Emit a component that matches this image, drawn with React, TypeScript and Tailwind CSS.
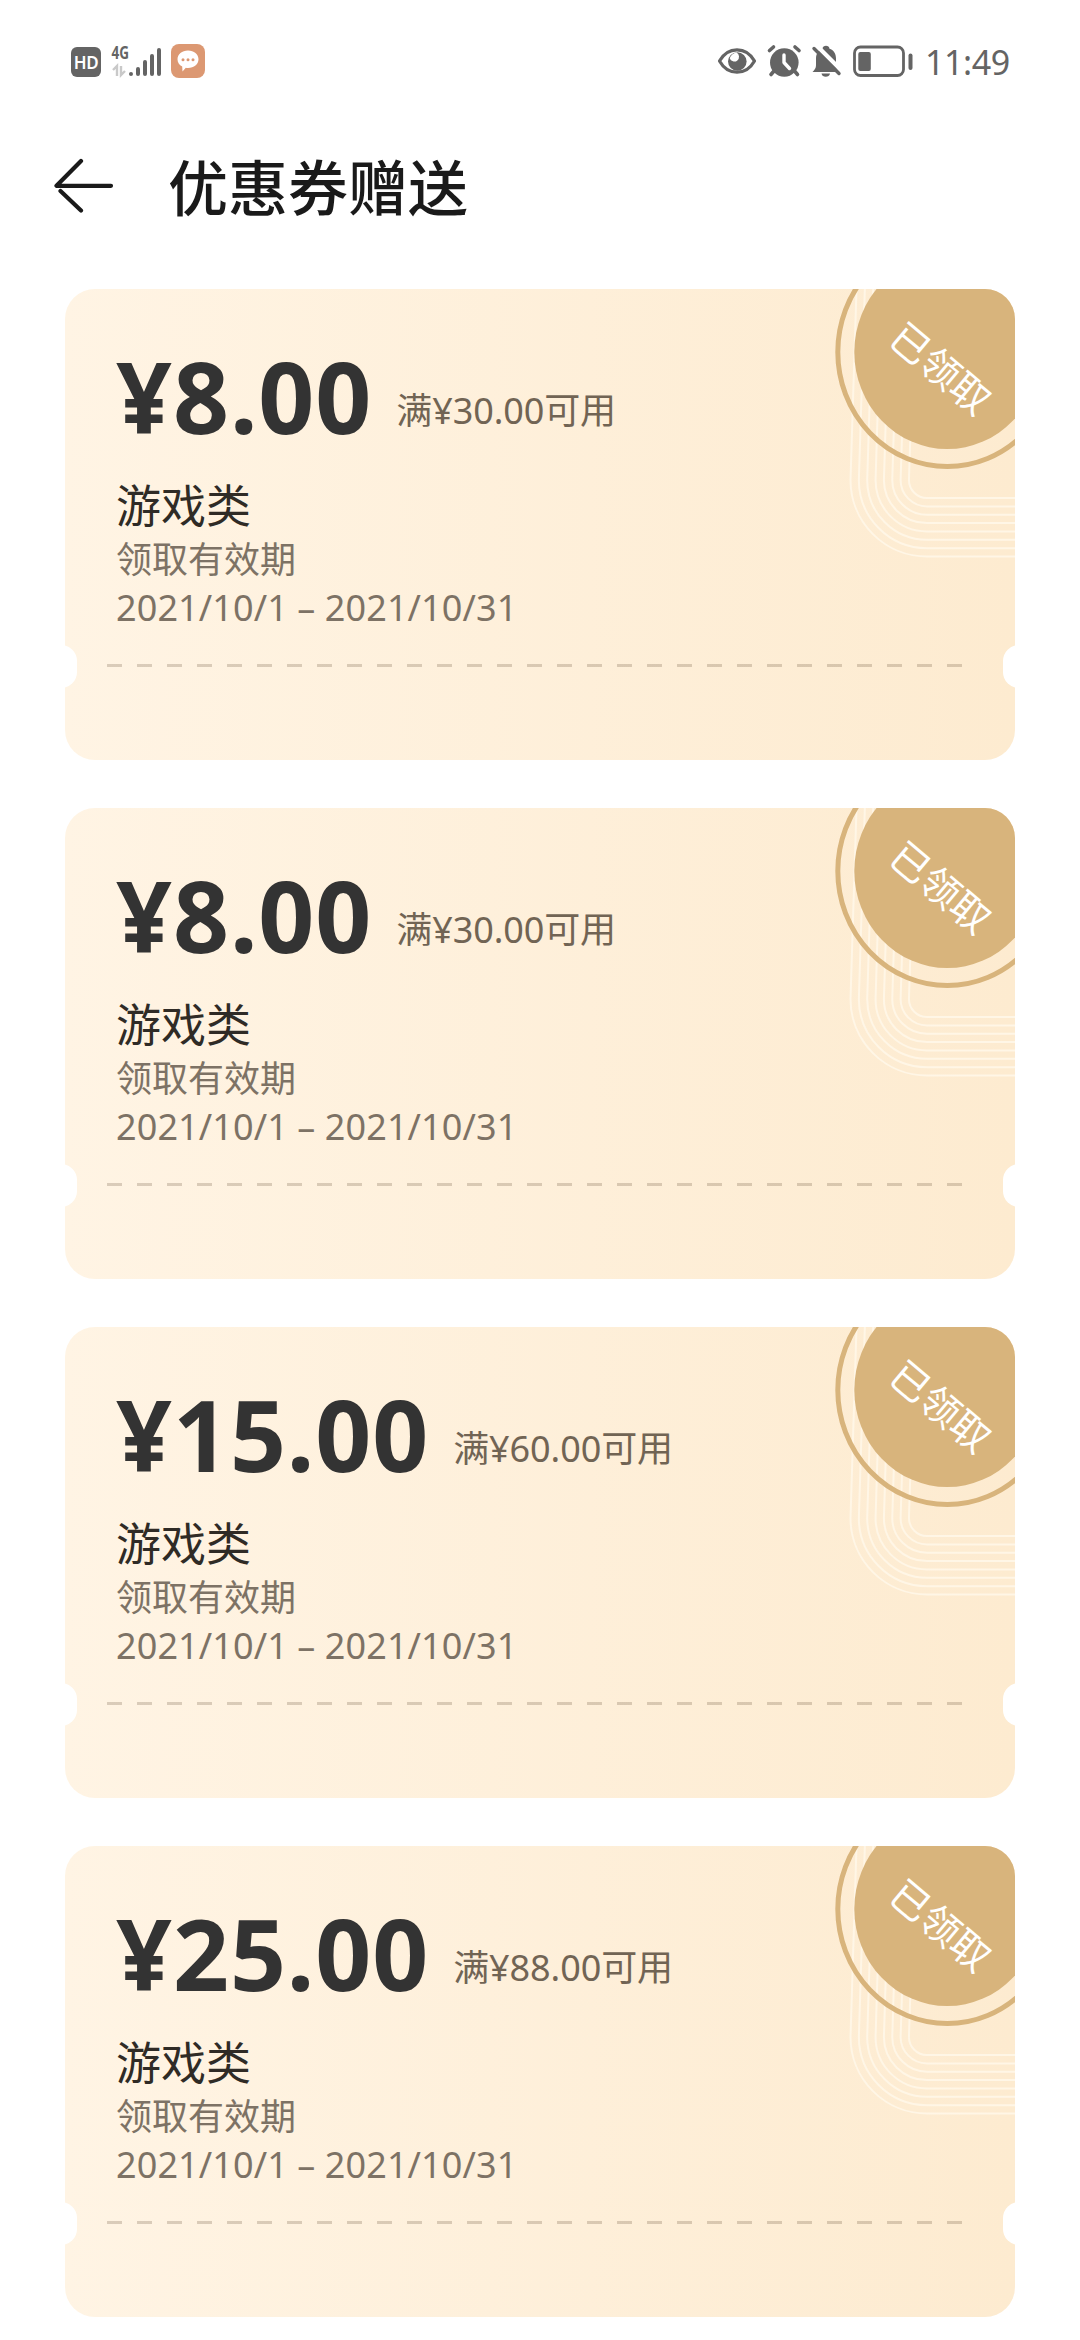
type Coupon = {
  id: number;
  price: string;
  condition: string;
};

const coupons: Coupon[] = [
  { id: 1, price: '¥8.00', condition: '满¥30.00可用' },
  { id: 2, price: '¥8.00', condition: '满¥30.00可用' },
  { id: 3, price: '¥15.00', condition: '满¥60.00可用' },
  { id: 4, price: '¥25.00', condition: '满¥88.00可用' },
];

const rings = [0, 1, 2, 3, 4, 5, 6, 7];

const StatusBar = () => (
  <div className="flex h-[124px] items-start justify-between pt-[31px] pr-[71px] pl-[71px] text-[#646464]">
    <div className="flex">
      <div className="mt-[16px] flex h-[30px] w-[30px] items-center justify-center rounded-[6px] bg-[#646464] text-[17px] leading-none font-semibold text-white">
        <span className="-tracking-[0.3px]">HD</span>
      </div>
      <svg className="ml-[10px]" width="52" height="50" viewBox="0 -10 52 50" fill="currentColor">
        <text
          x="0.5"
          y="18"
          fontSize="18"
          fontWeight="700"
          textLength="17.5"
          lengthAdjust="spacingAndGlyphs"
          className="font-['Noto_Sans',sans-serif]"
        >
          4G
        </text>
        <g stroke="#c9c9c9" strokeWidth="2.4" fill="none">
          <path d="M2 29l4-4v10M10 25v9l4-4" />
        </g>
        <g stroke="currentColor" strokeWidth="4" strokeLinecap="round">
          <path d="M20 33v0M27 28v5M34 21v12M41 15v18M48 9v24" />
        </g>
      </svg>
      <svg className="mt-[13px] ml-[8px]" width="34" height="34" viewBox="0 0 34 34">
        <rect width="34" height="34" rx="8" fill="#dc9872" />
        <path
          d="M17 6.5c6 0 10.5 3.9 10.5 8.700S23 24 17 24c-.8 0-1.500 0-2.200-.2L11.500 27.500l-.3-5C8.200 21 6.500 18.300 6.500 15.200 6.500 10.400 11 6.500 17 6.500z"
          fill="#fff"
        />
        <g fill="#dc9872">
          <circle cx="12" cy="15.7" r="1.5" />
          <circle cx="17" cy="15.7" r="1.5" />
          <circle cx="22" cy="15.7" r="1.5" />
        </g>
      </svg>
    </div>

    <div className="flex pt-[10px]">
      <svg width="200" height="42" viewBox="0 0 200 42" fill="none">
        {/* eye */}
        <path
          d="M2.500 20C7 12 13.500 8.800 20 8.800s13 3.200 17.500 11.200C33 28 26.500 31.200 20 31.200S7 28 2.500 20z"
          stroke="currentColor"
          strokeWidth="3.2"
          strokeLinejoin="round"
        />
        <circle cx="20.3" cy="20.5" r="9.3" fill="currentColor" />
        <path d="M19.500 11.500a4.800 4.800 0 1 1-6.800 5.800c1-3 3.500-5 6.800-5.800z" fill="#fff" />
        {/* alarm */}
        <circle cx="67.3" cy="21.5" r="14.3" fill="currentColor" />
        <path
          d="M52.500 9.500l4-3.500M78 6l4 3.500M57 30l-3 3.500M77.500 30l3 3.500"
          stroke="currentColor"
          strokeWidth="3.6"
          strokeLinecap="round"
        />
        <path
          d="M67 14v7.500l5.500 6"
          stroke="#fff"
          strokeWidth="3.4"
          strokeLinecap="round"
          strokeLinejoin="round"
        />
        {/* muted bell */}
        <path
          d="M95.500 31c3-3 3.500-4.500 3.500-7.500v-6c0-5 2.800-8.500 6.500-9.700 0-4 7-4 7 0 4 1.200 6.500 4.700 6.500 9.700v6c0 3 .5 4.500 3.500 7.500z"
          fill="currentColor"
        />
        <path d="M104.500 32.500h8.500c-.5 4.300-8 4.300-8.500 0z" fill="currentColor" />
        <path d="M99 4l27 27" stroke="#fff" strokeWidth="4.5" />
        <path
          d="M97 7.500l25 25"
          stroke="currentColor"
          strokeWidth="3.4"
          strokeLinecap="round"
        />
        {/* battery */}
        <rect x="137.5" y="6" width="49" height="28.5" rx="6" stroke="currentColor" strokeWidth="2.8" />
        <rect x="141.3" y="11" width="12.5" height="19" rx="2" fill="currentColor" />
        <rect x="191.5" y="12.5" width="4" height="16.5" rx="2" fill="currentColor" />
      </svg>
      <span className="ml-[8px] w-[84px] text-[34px] leading-[43px] font-normal -tracking-[0.4px] whitespace-nowrap">
        11:49
      </span>
    </div>
  </div>
);

const Header = () => (
  <header className="flex h-[165px] items-start pt-[22px] pl-[54px] text-[#1a1a1a]">
    <svg
      className="mt-[10px]"
      width="60"
      height="60"
      viewBox="0 0 60 60"
      fill="none"
      stroke="currentColor"
      strokeWidth="4.2"
      strokeLinecap="round"
      strokeLinejoin="round"
    >
      <path d="M27 5L2.500 29.800H57M27 54.500L6.500 35" />
    </svg>
    <h1 className="ml-[54px] text-[60px] leading-[84px] font-medium">优惠券赠送</h1>
  </header>
);

const ClaimedBadge = () => (
  <div className="absolute top-0 right-0 h-[280px] w-[190px]">
    <svg width="190" height="280" viewBox="0 0 190 280" fill="none">
      <g stroke="#fff6e6" strokeWidth="2">
        {rings.map((i) => {
          const r = 76.5 - i * 8.35;
          return (
            <path key={i} d={`M${108 - r} 0L${102 - r} 191a${r} ${r} 0 0 0 ${r} ${r}H190`} />
          );
        })}
      </g>
      <ellipse cx="122.3" cy="63" rx="109.5" ry="114.5" stroke="#d8b47c" strokeWidth="5" />
      <ellipse cx="122.3" cy="63" rx="93" ry="97" fill="#d8b47c" />
    </svg>
    <span className="absolute top-[59px] left-[56px] w-[120px] rotate-40 text-center text-[39px] leading-[40px] text-white">
      已领取
    </span>
  </div>
);

const CouponCard = ({ coupon }: { coupon: Coupon }) => (
  <article className="relative flex h-[471px] flex-col overflow-hidden rounded-[30px] bg-linear-to-r from-[#fff4e4] to-[#fdebd0] pt-[51px] pl-[51px]">
    <ClaimedBadge />
    <div className="flex h-[127px] items-start">
      <span className="text-[98px] leading-[112px] font-bold tracking-[0.9px] text-[#333]">
        {coupon.price}
      </span>
      <span className="mt-[47px] ml-[24px] text-[36px] leading-[48px] -tracking-[0.1px] text-[#716454]">
        {coupon.condition}
      </span>
    </div>
    <p className="mt-[9px] text-[45px] leading-[60px] text-[#2f2b26]">游戏类</p>
    <p className="text-[36px] leading-[48px] text-[#7d7265]">领取有效期</p>
    <p className="text-[36px] leading-[48px] tracking-[0.1px] text-[#7d7265]">
      2021/10/1 – 2021/10/31
    </p>

    {/* tear line and side notches */}
    <div className="absolute top-[375px] left-[42px] h-[3px] w-[855px] bg-[repeating-linear-gradient(90deg,rgba(70,45,20,0.2)_0_15px,transparent_15px_30px)]" />
    <div className="absolute top-[356px] -left-[20px] h-[43px] w-[32px] rounded-[16px] bg-white" />
    <div className="absolute top-[356px] -right-[20px] h-[43px] w-[32px] rounded-[16px] bg-white" />
  </article>
);

const App = () => {
  return (
    <main className="h-[2340px] w-[1080px] overflow-hidden bg-white font-['Noto_Sans','Noto_Sans_CJK_SC',sans-serif]">
      <StatusBar />
      <Header />
      <section className="flex flex-col gap-[48px] px-[65px]">
        {coupons.map((coupon) => (
          <CouponCard key={coupon.id} coupon={coupon} />
        ))}
      </section>
    </main>
  );
};

export default App;
